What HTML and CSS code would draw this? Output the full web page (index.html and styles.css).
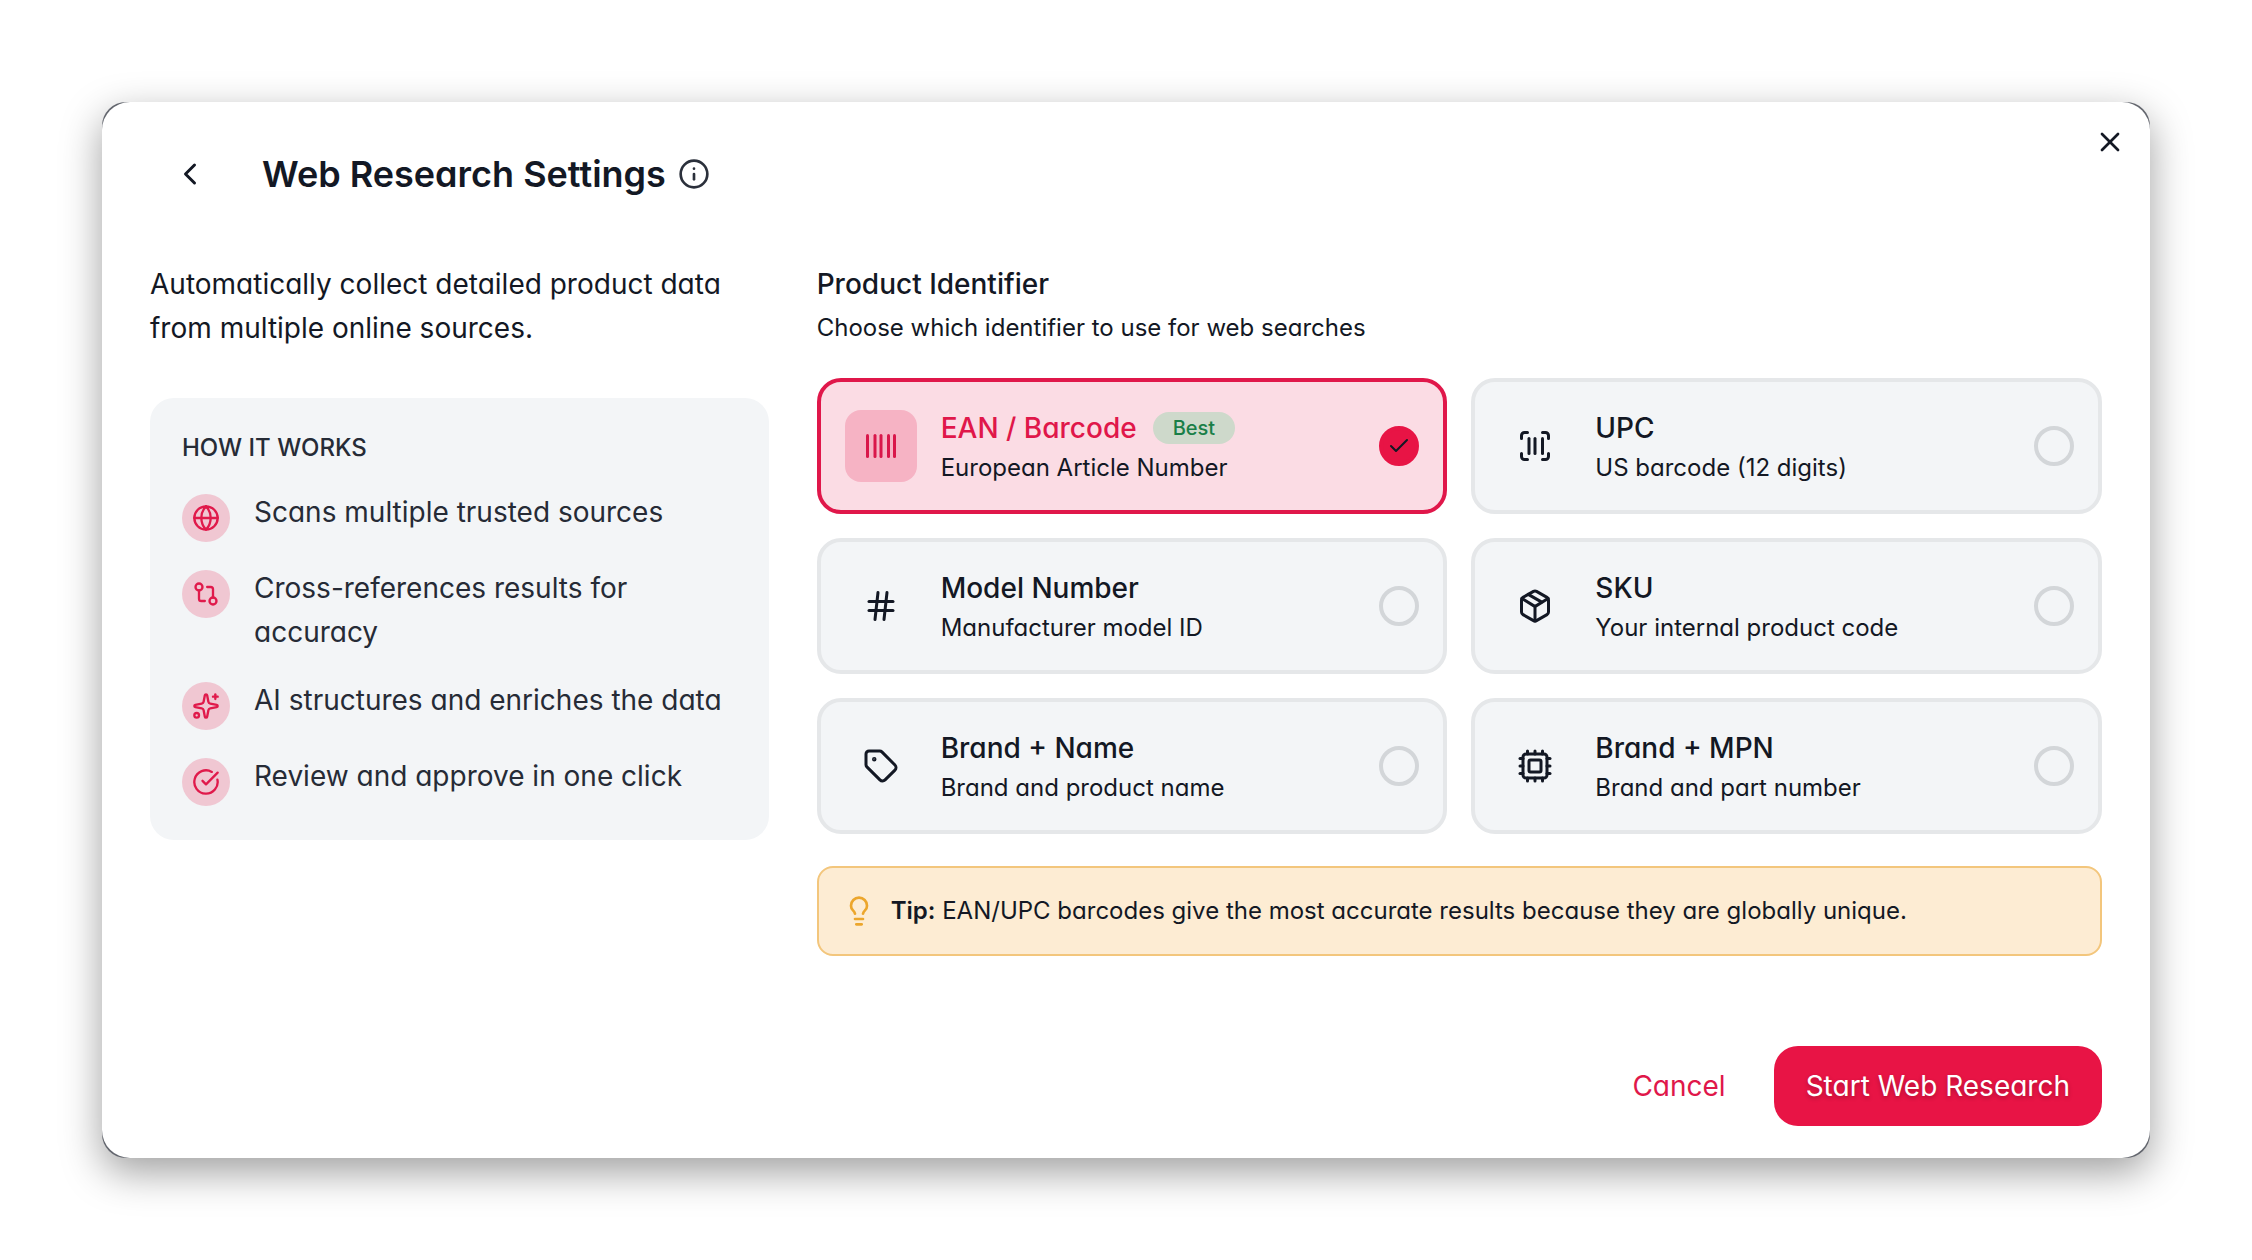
FILE: index.html
```html
<!DOCTYPE html>
<html lang="en">
<head>
  <meta charset="UTF-8">
  <meta name="viewport" content="width=device-width, initial-scale=1">
  <title>Web Research Settings</title>
  <link rel="stylesheet" href="styles.css">
</head>
<body>
  <div class="window">
    <main class="modal">
      <button class="close-btn" type="button" aria-label="Close">
        <svg class="icon icon-md" viewBox="0 0 24 24"><path d="M18 6 6 18"/><path d="m6 6 12 12"/></svg>
      </button>

      <header class="modal-header">
        <button class="back-btn" type="button" aria-label="Back">
          <svg class="icon icon-lg" viewBox="0 0 24 24"><path d="m15 18-6-6 6-6"/></svg>
        </button>
        <h1>Web Research Settings</h1>
        <svg class="icon icon-md info-icon" viewBox="0 0 24 24"><circle cx="12" cy="12" r="10"/><path d="M12 16v-4"/><path d="M12 8h.01"/></svg>
      </header>

      <div class="columns">
        <section class="intro">
          <p class="description">Automatically collect detailed product data from multiple online sources.</p>

          <div class="how">
            <h2>HOW IT WORKS</h2>
            <ul>
              <li>
                <span class="bullet">
                  <svg class="icon icon-sm" viewBox="0 0 24 24"><circle cx="12" cy="12" r="10"/><path d="M12 2a14.5 14.5 0 0 0 0 20 14.5 14.5 0 0 0 0-20"/><path d="M2 12h20"/></svg>
                </span>
                Scans multiple trusted sources
              </li>
              <li>
                <span class="bullet">
                  <svg class="icon icon-sm" viewBox="0 0 24 24"><circle cx="18" cy="18" r="3"/><circle cx="6" cy="6" r="3"/><path d="M13 6h3a2 2 0 0 1 2 2v7"/><path d="M11 18H8a2 2 0 0 1-2-2V9"/></svg>
                </span>
                Cross-references results for accuracy
              </li>
              <li>
                <span class="bullet">
                  <svg class="icon icon-sm" viewBox="0 0 24 24"><path d="M11.017 2.814a1 1 0 0 1 1.966 0l1.051 5.558a2 2 0 0 0 1.594 1.594l5.558 1.051a1 1 0 0 1 0 1.966l-5.558 1.051a2 2 0 0 0-1.594 1.594l-1.051 5.558a1 1 0 0 1-1.966 0l-1.051-5.558a2 2 0 0 0-1.594-1.594l-5.558-1.051a1 1 0 0 1 0-1.966l5.558-1.051a2 2 0 0 0 1.594-1.594z"/><path d="M20 2v4"/><path d="M22 4h-4"/><circle cx="4" cy="20" r="2"/></svg>
                </span>
                AI structures and enriches the data
              </li>
              <li>
                <span class="bullet">
                  <svg class="icon icon-sm" viewBox="0 0 24 24"><path d="M21.801 10A10 10 0 1 1 17 3.335"/><path d="m9 11 3 3L22 4"/></svg>
                </span>
                Review and approve in one click
              </li>
            </ul>
          </div>
        </section>

        <section class="identifier">
          <h2 id="identifierTitle">Product Identifier</h2>
          <p class="hint">Choose which identifier to use for web searches</p>

          <div class="options" role="radiogroup" aria-labelledby="identifierTitle">
            <label class="option">
              <span class="tile">
                <svg class="icon icon-lg" viewBox="0 0 24 24"><path d="M3 5v14"/><path d="M8 5v14"/><path d="M12 5v14"/><path d="M17 5v14"/><path d="M21 5v14"/></svg>
              </span>
              <span class="option-text">
                <span class="option-title">EAN / Barcode <span class="badge">Best</span></span>
                <span class="option-sub">European Article Number</span>
              </span>
              <span class="radio">
                <input type="radio" name="identifier" value="ean" checked>
                <svg class="icon check" viewBox="0 0 24 24"><path d="M20 6 9 17l-5-5"/></svg>
              </span>
            </label>

            <label class="option">
              <span class="tile">
                <svg class="icon icon-lg" viewBox="0 0 24 24"><path d="M3 7V5a2 2 0 0 1 2-2h2"/><path d="M17 3h2a2 2 0 0 1 2 2v2"/><path d="M21 17v2a2 2 0 0 1-2 2h-2"/><path d="M7 21H5a2 2 0 0 1-2-2v-2"/><path d="M8 7v10"/><path d="M12 7v10"/><path d="M17 7v10"/></svg>
              </span>
              <span class="option-text">
                <span class="option-title">UPC</span>
                <span class="option-sub">US barcode (12 digits)</span>
              </span>
              <span class="radio">
                <input type="radio" name="identifier" value="upc">
                <svg class="icon check" viewBox="0 0 24 24"><path d="M20 6 9 17l-5-5"/></svg>
              </span>
            </label>

            <label class="option">
              <span class="tile">
                <svg class="icon icon-lg" viewBox="0 0 24 24"><path d="M4 9h16"/><path d="M4 15h16"/><path d="M10 3 8 21"/><path d="M16 3l-2 18"/></svg>
              </span>
              <span class="option-text">
                <span class="option-title">Model Number</span>
                <span class="option-sub">Manufacturer model ID</span>
              </span>
              <span class="radio">
                <input type="radio" name="identifier" value="model">
                <svg class="icon check" viewBox="0 0 24 24"><path d="M20 6 9 17l-5-5"/></svg>
              </span>
            </label>

            <label class="option">
              <span class="tile">
                <svg class="icon icon-lg" viewBox="0 0 24 24"><path d="M11 21.73a2 2 0 0 0 2 0l7-4A2 2 0 0 0 21 16V8a2 2 0 0 0-1-1.73l-7-4a2 2 0 0 0-2 0l-7 4A2 2 0 0 0 3 8v8a2 2 0 0 0 1 1.73z"/><path d="M12 22V12"/><path d="m3.3 7 7.703 4.734a2 2 0 0 0 1.994 0L20.7 7"/><path d="m7.5 4.27 9 5.15"/></svg>
              </span>
              <span class="option-text">
                <span class="option-title">SKU</span>
                <span class="option-sub">Your internal product code</span>
              </span>
              <span class="radio">
                <input type="radio" name="identifier" value="sku">
                <svg class="icon check" viewBox="0 0 24 24"><path d="M20 6 9 17l-5-5"/></svg>
              </span>
            </label>

            <label class="option">
              <span class="tile">
                <svg class="icon icon-lg" viewBox="0 0 24 24"><path d="M12.586 2.586A2 2 0 0 0 11.172 2H4a2 2 0 0 0-2 2v7.172a2 2 0 0 0 .586 1.414l8.704 8.704a2.426 2.426 0 0 0 3.42 0l6.58-6.58a2.426 2.426 0 0 0 0-3.42z"/><circle cx="7.5" cy="7.5" r=".5" fill="currentColor"/></svg>
              </span>
              <span class="option-text">
                <span class="option-title">Brand + Name</span>
                <span class="option-sub">Brand and product name</span>
              </span>
              <span class="radio">
                <input type="radio" name="identifier" value="brand-name">
                <svg class="icon check" viewBox="0 0 24 24"><path d="M20 6 9 17l-5-5"/></svg>
              </span>
            </label>

            <label class="option">
              <span class="tile">
                <svg class="icon icon-lg" viewBox="0 0 24 24"><rect x="4" y="4" width="16" height="16" rx="2"/><rect x="8" y="8" width="8" height="8" rx="1"/><path d="M12 20v2"/><path d="M12 2v2"/><path d="M17 20v2"/><path d="M17 2v2"/><path d="M2 12h2"/><path d="M2 17h2"/><path d="M2 7h2"/><path d="M20 12h2"/><path d="M20 17h2"/><path d="M20 7h2"/><path d="M7 20v2"/><path d="M7 2v2"/></svg>
              </span>
              <span class="option-text">
                <span class="option-title">Brand + MPN</span>
                <span class="option-sub">Brand and part number</span>
              </span>
              <span class="radio">
                <input type="radio" name="identifier" value="brand-mpn">
                <svg class="icon check" viewBox="0 0 24 24"><path d="M20 6 9 17l-5-5"/></svg>
              </span>
            </label>
          </div>

          <div class="tip">
            <svg class="icon icon-md" viewBox="0 0 24 24"><path d="M15 14c.2-1 .7-1.7 1.5-2.5 1-.9 1.5-2.2 1.5-3.5A6 6 0 0 0 6 8c0 1 .2 2.2 1.5 3.5.7.7 1.3 1.5 1.5 2.5"/><path d="M9 18h6"/><path d="M10 22h4"/></svg>
            <p><strong>Tip:</strong> EAN/UPC barcodes give the most accurate results because they are globally unique.</p>
          </div>
        </section>
      </div>

      <footer class="modal-footer">
        <button class="btn btn-text" type="button">Cancel</button>
        <button class="btn btn-primary" type="button">Start Web Research</button>
      </footer>
    </main>
  </div>
</body>
</html>
```

FILE: styles.css
```css
* {
  box-sizing: border-box;
}

body {
  margin: 0;
  padding: 102px;
  background-color: #fff;
  color: #131824;
  font-family: Inter, "Liberation Sans", sans-serif;
  font-feature-settings: "cv11";
  font-size: 28px;
  line-height: 44px;
}

h1,
h2,
p,
ul {
  margin: 0;
  padding: 0;
}

button {
  border: none;
  background: none;
  padding: 0;
  color: inherit;
  font: inherit;
  font-feature-settings: inherit;
  cursor: pointer;
}

/* Icons */
.icon {
  display: block;
  flex-shrink: 0;
  fill: none;
  stroke: currentColor;
  stroke-width: 2;
  stroke-linecap: round;
  stroke-linejoin: round;
}

.icon-sm {
  width: 28px;
  height: 28px;
}

.icon-md {
  width: 32px;
  height: 32px;
}

.icon-lg {
  width: 36px;
  height: 36px;
}

/* Modal */
.window {
  border-radius: 24px;
  background-color: #63666e;
  box-shadow: 0 14px 40px rgba(0, 0, 0, 0.38);
}

.modal {
  position: relative;
  padding: 32px 48px;
  border-radius: 28px;
  background-color: #fff;
}

.close-btn {
  position: absolute;
  top: 24px;
  right: 24px;
}

.modal-header {
  display: flex;
  align-items: center;
  margin-bottom: 48px;
}

.back-btn {
  display: flex;
  align-items: center;
  justify-content: center;
  width: 80px;
  height: 80px;
  margin-right: 32px;
}

.modal-header h1 {
  font-size: 36px;
  font-weight: 600;
  line-height: 44px;
}

.info-icon {
  margin-left: 12px;
  color: #2b303b;
}

.columns {
  display: grid;
  grid-template-columns: repeat(3, 1fr);
  gap: 48px;
  align-items: start;
}

/* Left column */
.description {
  margin-bottom: 48px;
}

.how {
  padding: 32px 32px 34px;
  border-radius: 24px;
  background-color: #f3f5f7;
  color: #262b36;
}

.how h2 {
  margin-bottom: 24px;
  font-size: 24px;
  font-weight: 500;
  line-height: 36px;
}

.how ul {
  display: flex;
  flex-direction: column;
  gap: 24px;
  list-style: none;
}

.how li {
  display: flex;
  align-items: flex-start;
  gap: 24px;
}

.bullet {
  display: flex;
  flex-shrink: 0;
  align-items: center;
  justify-content: center;
  width: 48px;
  height: 48px;
  margin-top: 4px;
  border-radius: 50%;
  background-color: #f0c7d2;
  color: #e01a4b;
}

/* Right column */
.identifier {
  grid-column: span 2;
}

.identifier h2 {
  margin-bottom: 4px;
  font-size: 28px;
  font-weight: 500;
}

.hint {
  margin-bottom: 32px;
  font-size: 24px;
  line-height: 36px;
}

.options {
  display: grid;
  grid-template-columns: repeat(2, 1fr);
  gap: 24px;
  margin-bottom: 32px;
}

.option {
  display: flex;
  align-items: center;
  gap: 24px;
  padding: 24px;
  border: 4px solid #e5e7e9;
  border-radius: 24px;
  background-color: #f3f5f7;
  cursor: pointer;
}

.tile {
  display: flex;
  align-items: center;
  justify-content: center;
  width: 72px;
  height: 72px;
  border-radius: 16px;
}

.option-text {
  display: flex;
  flex: 1;
  flex-direction: column;
}

.option-title {
  display: flex;
  align-items: center;
  gap: 16px;
  font-weight: 500;
}

.option-sub {
  font-size: 24px;
  line-height: 36px;
}

.badge {
  padding: 0 20px;
  border-radius: 16px;
  background-color: #ced9cb;
  color: #1a7f48;
  font-size: 20px;
  line-height: 32px;
}

.radio {
  display: grid;
  place-items: center;
}

.radio input,
.radio .check {
  grid-area: 1 / 1;
}

.radio input {
  appearance: none;
  width: 40px;
  height: 40px;
  margin: 0;
  border: 4px solid #d3d6d9;
  border-radius: 50%;
}

.radio .check {
  display: none;
  width: 24px;
  height: 24px;
}

.option:has(input:checked) {
  border-color: #e0174a;
  background-color: #fbdce4;
}

.option:has(input:checked) .tile {
  background-color: #f6b3c4;
  color: #d9174a;
}

.option:has(input:checked) .option-title {
  color: #e0174a;
}

.option:has(input:checked) .badge {
  color: #1a7f48;
}

.radio input:checked {
  border-color: #e81445;
  background-color: #e81445;
}

.radio input:checked + .check {
  display: block;
}

.tip {
  display: flex;
  align-items: center;
  gap: 16px;
  padding: 24px;
  border: 2px solid #f3c67c;
  border-radius: 16px;
  background-color: #fdecd3;
  font-size: 24px;
  line-height: 38px;
}

.tip .icon {
  color: #eca62c;
}

.tip strong {
  font-weight: 600;
}

/* Footer */
.modal-footer {
  display: flex;
  justify-content: flex-end;
  gap: 16px;
  margin-top: 90px;
}

.btn {
  height: 80px;
  padding: 0 32px;
  border-radius: 24px;
}

.btn-text {
  color: #e0174a;
}

.btn-primary {
  background-color: #e81445;
  color: #fff;
  text-shadow: 0 2px 4px rgba(0, 0, 0, 0.25);
}
```
